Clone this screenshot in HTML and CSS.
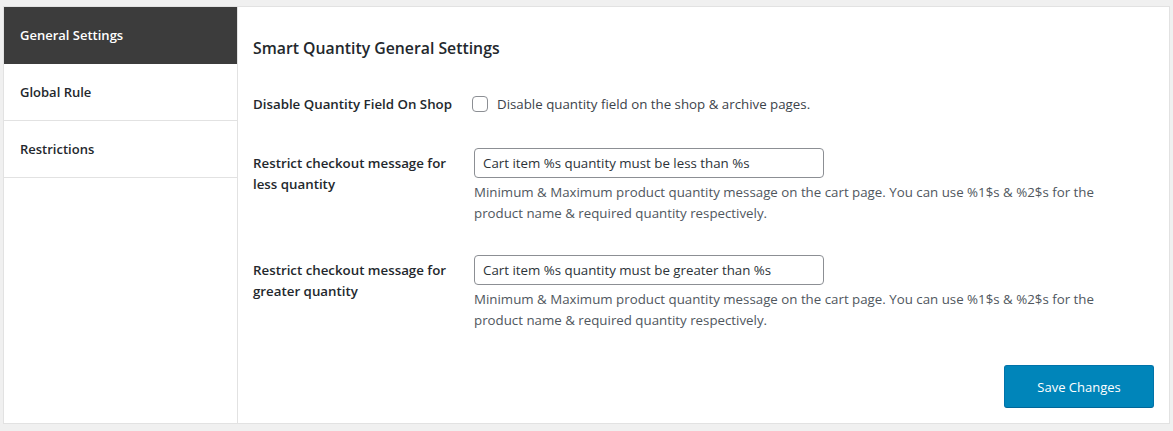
FILE: index.html
```html
<!DOCTYPE html>
<html lang="en">
<head>
<meta charset="utf-8">
<title>Smart Quantity Settings</title>
<link rel="stylesheet" href="styles.css">
</head>
<body>
<div class="wrap">
  <nav class="side">
    <a class="tab active" href="#">General Settings</a>
    <a class="tab" href="#">Global Rule</a>
    <a class="tab" href="#">Restrictions</a>
  </nav>
  <main class="content">
    <h2 class="title">Smart Quantity General Settings</h2>
    <div class="row row-check">
      <div class="label">Disable Quantity Field On Shop</div>
      <div class="field">
        <label class="check"><span class="box"></span>Disable quantity field on the shop &amp; archive pages.</label>
      </div>
    </div>
    <div class="row row-text first">
      <div class="label">Restrict checkout message for<br>less quantity</div>
      <div class="field">
        <div class="input">Cart item %s quantity must be less than %s</div>
        <p class="desc">Minimum &amp; Maximum product quantity message on the cart page. You can use %1$s &amp; %2$s for the<br>product name &amp; required quantity respectively.</p>
      </div>
    </div>
    <div class="row row-text second">
      <div class="label">Restrict checkout message for<br>greater quantity</div>
      <div class="field">
        <div class="input">Cart item %s quantity must be greater than %s</div>
        <p class="desc">Minimum &amp; Maximum product quantity message on the cart page. You can use %1$s &amp; %2$s for the<br>product name &amp; required quantity respectively.</p>
      </div>
    </div>
    <div class="actions">
      <button class="save" type="button">Save Changes</button>
    </div>
  </main>
</div>
</body>
</html>
```

FILE: styles.css
```css
* { box-sizing: border-box; }
html, body { margin: 0; padding: 0; }
body {
  background: #f0f0f0;
  font-family: "Open Sans", "Noto Sans", sans-serif;
  font-size: 13.3px;
  color: #23282d;
  width: 1173px;
  height: 431px;
  overflow: hidden;
}
.wrap {
  margin: 6px 0 0 3px;
  width: 1167px;
  height: 418px;
  background: #fff;
  border: 1px solid #e2e2e2;
  display: flex;
}
.side {
  width: 234px;
  border-right: 1px solid #e2e2e2;
  display: flex;
  flex-direction: column;
  flex: none;
}
.tab {
  display: flex;
  align-items: center;
  height: 57px;
  padding: 0 0 1px 16px;
  border-bottom: 1px solid #e2e2e2;
  color: #23282d;
  text-decoration: none;
  font-weight: 600;
  font-size: 13px;
}
.tab.active {
  background: #3c3c3c;
  color: #fff;
  border-bottom-color: #3c3c3c;
}
.content {
  flex: 1;
  padding: 0 15px 0 15px;
  display: flex;
  flex-direction: column;
}
.title {
  margin: 31px 0 0;
  font-size: 15.8px;
  font-weight: 600;
  line-height: 20px;
  color: #23282d;
}
.row {
  display: flex;
}
.label {
  width: 221px;
  flex: none;
  font-weight: 600;
  line-height: 21px;
}
.row-check { margin-top: 36px; align-items: center; height: 20px; }
.row-check .field { margin-left: -2px; }
.check {
  display: flex;
  align-items: center;
  color: #3c434a;
}
.box {
  width: 16px;
  height: 16px;
  border: 1px solid #8c8f94;
  border-radius: 4px;
  margin-right: 9px;
  background: #fff;
}
.row-text .label { padding-top: 5px; }
.row-text.first { margin-top: 34px; }
.row-text.second { margin-top: 31px; }
.input {
  width: 350px;
  height: 30px;
  border: 1px solid #8c8f94;
  border-radius: 4px;
  padding: 0 8px;
  line-height: 28px;
  color: #2c3338;
}
.desc {
  margin: 4px 0 0;
  line-height: 21px;
  color: #50575e;
  white-space: nowrap;
}
.actions {
  margin-top: auto;
  margin-bottom: 15px;
  display: flex;
  justify-content: flex-end;
}
.save {
  width: 150px;
  height: 43px;
  background: #0085ba;
  border: 1px solid #0073aa;
  border-bottom-color: #006799;
  border-radius: 3px;
  color: #fff;
  font-family: inherit;
  font-size: 13px;
  padding: 0;
}
```
